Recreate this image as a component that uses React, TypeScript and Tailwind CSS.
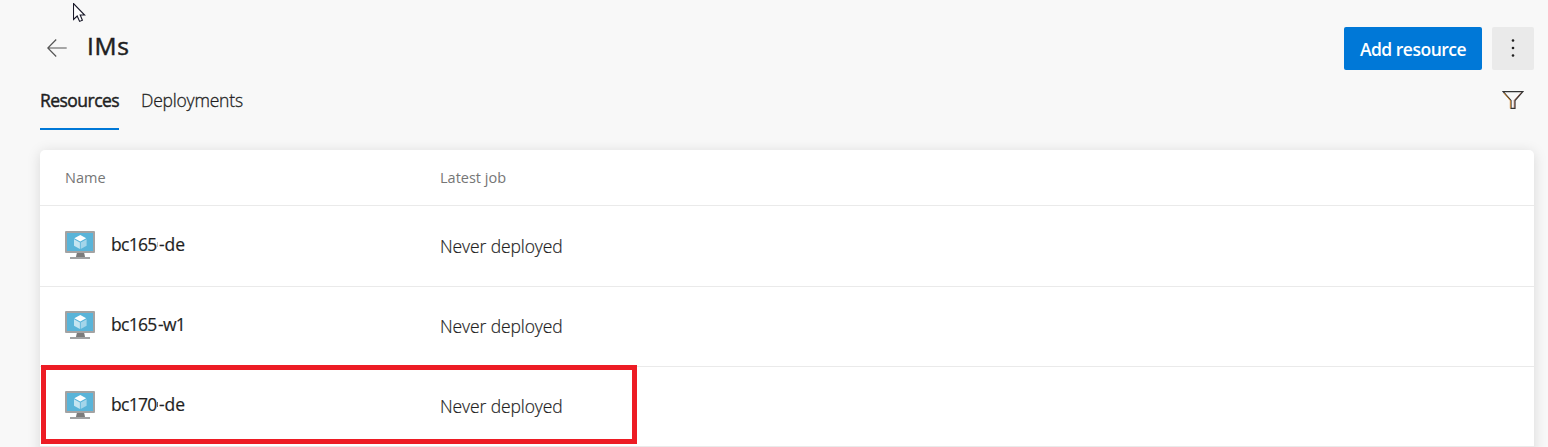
import React from "react";

const FONT = "font-['Open_Sans','Noto_Sans',sans-serif]";

const rows = [
  { name: "bc165", suffix: "-de", job: "Never deployed", tick: "bg-[#bbb]" },
  { name: "bc165", suffix: "-w1", job: "Never deployed", tick: "" },
  { name: "bc170", suffix: "-de", job: "Never deployed", tick: "bg-[#666]", marked: true },
];

function VmIcon() {
  return (
    <svg width="30" height="28" viewBox="0 0 30 28" className="block shrink-0">
      <path d="M12 21h7l1 5h-9z" fill="#7b7b7b" />
      <rect width="30" height="22" rx="1" fill="#a3a3a3" />
      <rect x="2" y="2" width="26" height="18" fill="#59b4d9" />
      <rect x="5" y="26" width="20" height="2" fill="#a0a1a2" />
      <path d="M15.3 4 21.2 7.3 15.3 10.6 9.3 7.3Z" fill="#fff" />
      <path d="M9 8.2 14.9 11.5V18L9 14.8Z" fill="#c3e4f1" />
      <path d="M21.6 8.2 15.7 11.5V18L21.6 14.8Z" fill="#a3d5ea" />
    </svg>
  );
}

function BackArrow() {
  return (
    <svg width="20" height="18" viewBox="0 0 20 18" fill="none" stroke="#555" strokeWidth="1.2" className="block">
      <path d="M9.2 .5.8 9 9.2 17.5M.8 9H19.7" />
    </svg>
  );
}

function Cursor() {
  return (
    <svg width="14" height="20" viewBox="0 0 14 20" className="absolute left-[73px] top-[3px]">
      <path d="M.5.5V16.5L4.2 13 6.6 18.4 9.4 17.2 7.2 12H11.6Z" fill="#fff" stroke="#181828" strokeWidth="1.1" />
    </svg>
  );
}

export default function App() {
  return (
    <div className={`relative h-[447px] w-[1548px] overflow-hidden bg-[#f8f8f8] pl-10 pr-[14px] text-[#1f1f1f] ${FONT}`}>
      <Cursor />
      <header className="flex h-[70px] items-start pt-[27px]">
        <div className="ml-[6.5px] mt-[12px]"><BackArrow /></div>
        <h1 className="ml-[20.5px] text-[24.5px] leading-[38px] tracking-[0.7px] [-webkit-text-stroke:0.5px_#1f1f1f]">IMs</h1>
        <div className="ml-auto flex gap-[10px]">
          <button className="h-[43px] w-[138px] whitespace-nowrap rounded-[2px] bg-[#0078d7] pt-px text-[17.5px] font-semibold tracking-[-0.5px] text-white">Add resource</button>
          <button className="flex h-[43px] w-[42px] items-center justify-center rounded-[2px] bg-[#eaeaea]">
            <svg width="4" height="20" viewBox="0 0 4 20" fill="#1f1f1f" className="mb-px">
              <circle cx="2" cy="2.5" r="1.3" /><circle cx="2" cy="10" r="1.3" /><circle cx="2" cy="17.5" r="1.3" />
            </svg>
          </button>
        </div>
      </header>
      <nav className="flex h-[80px] items-start text-[17.5px] leading-[26px]">
        <span className="h-[60px] w-[79px] whitespace-nowrap border-b-2 border-[#0078d7] pt-[17px] tracking-[-0.54px] [-webkit-text-stroke:0.45px_#1f1f1f]">Resources</span>
        <span className="ml-[22px] whitespace-nowrap pt-[17px] font-light tracking-[-0.2px] [-webkit-text-stroke:0.3px_#1f1f1f]">Deployments</span>
        <svg width="22" height="20" viewBox="0 0 22 20" fill="none" stroke="#333" strokeWidth="1.2" className="ml-auto mr-[10px] mt-[20px]">
          <path d="M1.2 1.6H20.8L13 10.5V18.4H9V10.5Z" />
          <path d="M1.8 3 8.3 10.6V18.4" stroke="#d98a2b" strokeWidth=".9" />
          <path d="M12.2 18V10.4L19 2.7" stroke="#8c3a22" strokeWidth=".6" />
        </svg>
      </nav>
      <main className="h-[320px] rounded-t-[5px] bg-white shadow-[0_2px_14px_rgba(0,0,0,0.13)]">
        <div className="flex h-[56px] items-center border-b border-[#eaeaea] pl-[25px] text-[14.5px] text-[#767676]">
          <span className="w-[375px]">Name</span>
          <span>Latest job</span>
        </div>
        {rows.map((row, i) => (
          <div key={i} className={`relative flex items-start border-b border-[#eaeaea] pl-[25px] ${i === 0 ? "h-[81px] pt-[25px]" : "h-[80px] pt-[24px]"}`}>
            <VmIcon />
            <div className="ml-[16px] flex w-[329px] text-[17.5px] leading-[26px] [-webkit-text-stroke:0.2px_#1f1f1f]">
              <span className="w-[46px] tracking-[-0.7px]">{row.name}</span>
              <span className={`mr-px mt-[11px] h-[5px] w-px ${row.tick}`} />
              <span className={row.suffix === "-w1" ? "-ml-px tracking-[-0.7px]" : "tracking-[-0.1px]"}>{row.suffix}</span>
            </div>
            <span className="mt-[2px] text-[17.5px] font-light leading-[26px] tracking-[-0.1px] [-webkit-text-stroke:0.2px_#1f1f1f]">{row.job}</span>
            {row.marked && <div className="absolute left-px top-[-2px] h-[79px] w-[596px] border-[5px] border-[#ed1c24]" />}
          </div>
        ))}
      </main>
    </div>
  );
}
